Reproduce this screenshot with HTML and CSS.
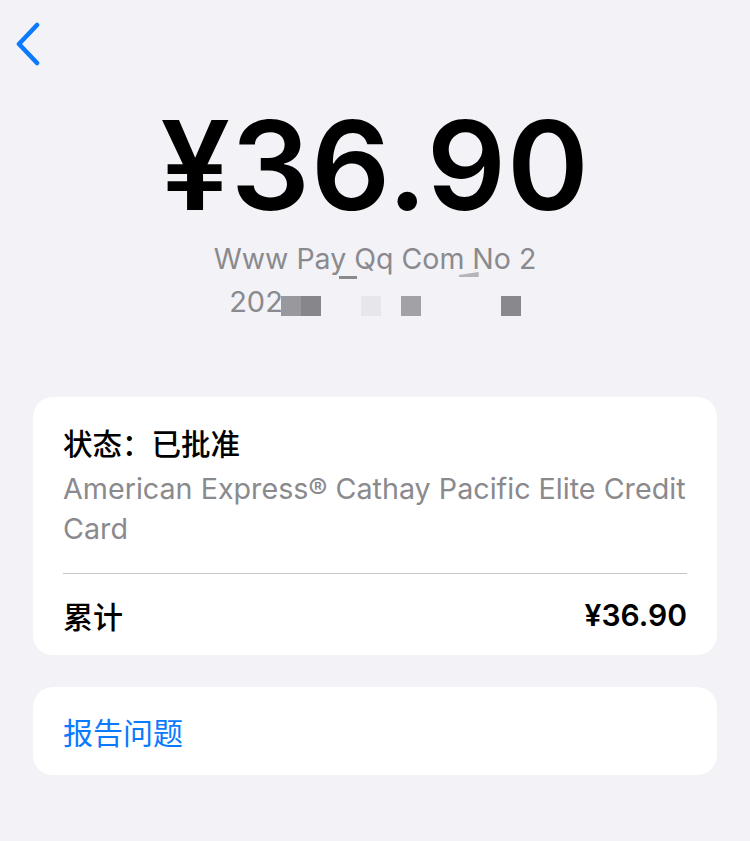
FILE: index.html
```html
<!DOCTYPE html>
<html lang="zh-CN">
<head>
  <meta charset="UTF-8">
  <title>交易详情</title>
  <link rel="stylesheet" href="styles.css">
</head>
<body>
  <div class="nav">
    <svg class="back" width="30" height="44" viewBox="0 0 30 44">
      <path d="M22 3 L4 22 L22 41" fill="none" stroke="#0a7aff" stroke-width="4.6" stroke-linecap="round" stroke-linejoin="round"/>
    </svg>
  </div>

  <div class="header">
    <div class="amount">¥36.90</div>
    <div class="merchant">
      Www Pay Qq Com No 2
      <span class="mark mark-a"></span>
      <span class="mark mark-b"></span>
    </div>
    <div class="date">202<span class="px px1"></span><span class="px px2"></span><span class="px px3"></span><span class="px px4"></span><span class="px px5"></span></div>
  </div>

  <div class="card card-main">
    <div class="status">状态：已批准</div>
    <div class="card-name">American Express® Cathay Pacific Elite Credit Card</div>
    <div class="divider"></div>
    <div class="row">
      <span class="row-label">累计</span>
      <span class="row-value">¥36.90</span>
    </div>
  </div>

  <div class="card card-link">
    <span class="link">报告问题</span>
  </div>
</body>
</html>
```

FILE: styles.css
```css
body {
  margin: 0;
  background-color: #f2f2f7;
  font-family: Inter, "Noto Sans CJK SC", sans-serif;
  color: #000;
}

.nav {
  height: 84px;
  padding-left: 15px;
  padding-top: 22px;
  box-sizing: border-box;
}

.back {
  display: block;
}

.header {
  text-align: center;
}

.amount {
  margin-top: 6px;
  font-size: 124px;
  font-weight: 600;
  line-height: 150px;
  letter-spacing: 1px;
}

.merchant {
  position: relative;
  display: inline-block;
  font-size: 28.5px;
  line-height: 36px;
  color: #8a8a8e;
  margin-top: 1px;
}

/* bits of the blurred-out text */
.mark {
  position: absolute;
  height: 3px;
  background-color: #8a8a8e;
}

.mark-a {
  left: 125px;
  top: 35px;
  width: 18px;
}

.mark-b {
  left: 245px;
  top: 31px;
  width: 20px;
  height: 5px;
  background-color: #b5b5b9;
  clip-path: polygon(0 60%, 100% 0, 100% 100%, 0 100%);
}

.date {
  font-size: 29px;
  line-height: 40px;
  color: #8a8a8e;
  margin-top: 5px;
}

.px {
  display: inline-block;
  width: 20px;
  height: 20px;
  vertical-align: -4px;
}

.px1 { background-color: #99999d; margin-left: -2px; }
.px2 { background-color: #86868b; }
.px3 { background-color: #e6e6eb; margin-left: 40px; }
.px4 { background-color: #a2a2a6; margin-left: 20px; }
.px5 { background-color: #88888d; margin-left: 80px; }

.card {
  background-color: #fff;
  border-radius: 20px;
  margin: 0 33px;
  padding: 0 30px;
}

.card-main {
  margin-top: 75px;
}

.status {
  padding-top: 27px;
  margin-bottom: 5px;
  font-size: 29.5px;
  line-height: 40px;
  font-weight: 500;
}

.card-name {
  font-size: 28.7px;
  line-height: 40px;
  color: #8a8a8e;
  padding-bottom: 24px;
}

.divider {
  height: 1px;
  background-color: #c6c6c8;
}

.row {
  display: flex;
  justify-content: space-between;
  align-items: center;
  height: 81px;
  font-size: 30px;
}

.row-label {
  font-weight: 500;
}

.row-value {
  font-weight: 600;
}

.card-link {
  margin-top: 32px;
  height: 88px;
  display: flex;
  align-items: center;
}

.link {
  color: #0a7aff;
  font-size: 30px;
}
```
